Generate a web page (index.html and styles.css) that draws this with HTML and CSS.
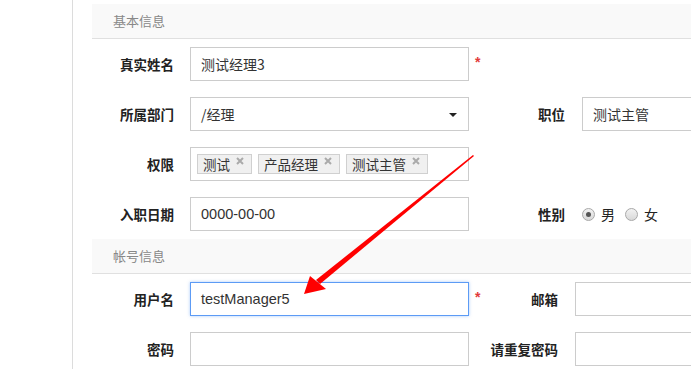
FILE: index.html
```html
<!DOCTYPE html>
<html>
<head>
<meta charset="utf-8">
<link rel="stylesheet" href="styles.css">
</head>
<body>
<div class="page">
  <div class="side"></div>
  <div class="main">
    <div class="sec-head">基本信息</div>
    <div class="row">
      <div class="lbl">真实姓名</div>
      <div class="field">测试经理3</div>
      <div class="mark">*</div>
    </div>
    <div class="row">
      <div class="lbl">所属部门</div>
      <div class="field select">/经理<span class="caret"></span></div>
      <div class="mark"></div>
      <div class="lbl2">职位</div>
      <div class="field">测试主管</div>
    </div>
    <div class="row">
      <div class="lbl">权限</div>
      <div class="field tags">
        <span class="tag">测试<svg class="x" viewBox="0 0 8 8"><path d="M1 1L7 7M7 1L1 7"/></svg></span>
        <span class="tag">产品经理<svg class="x" viewBox="0 0 8 8"><path d="M1 1L7 7M7 1L1 7"/></svg></span>
        <span class="tag">测试主管<svg class="x" viewBox="0 0 8 8"><path d="M1 1L7 7M7 1L1 7"/></svg></span>
      </div>
    </div>
    <div class="row">
      <div class="lbl">入职日期</div>
      <div class="field latin">0000-00-00</div>
      <div class="mark"></div>
      <div class="lbl2">性别</div>
      <div class="radios">
        <span class="radio on"></span><span class="rtxt">男</span>
        <span class="radio"></span><span class="rtxt">女</span>
      </div>
    </div>
    <div class="sec-head">帐号信息</div>
    <div class="row">
      <div class="lbl">用户名</div>
      <div class="field latin focus">testManager5</div>
      <div class="mark">*</div>
      <div class="lbl2 narrow">邮箱</div>
      <div class="field"></div>
    </div>
    <div class="row">
      <div class="lbl">密码</div>
      <div class="field"></div>
      <div class="mark"></div>
      <div class="lbl2 narrow">请重复密码</div>
      <div class="field"></div>
    </div>
  </div>
</div>
<svg class="arrow" viewBox="0 0 691 369" width="691" height="369">
  <polygon points="473,155 474,156 320,284 316,280" fill="#ff0000"/>
  <polygon points="304,294 310,276 326,289" fill="#ff0000"/>
</svg>
</body>
</html>
```

FILE: styles.css
```css
html, body {
  margin: 0;
  padding: 0;
  background: #fff;
  overflow: hidden;
}
body {
  width: 691px;
  height: 369px;
  position: relative;
  font-family: "Liberation Sans", "Noto Sans CJK SC", sans-serif;
  color: #333;
}
.page {
  display: flex;
  width: 691px;
  height: 369px;
  overflow: hidden;
}
.side {
  width: 72px;
  flex: none;
  border-right: 1px solid #dcdcdc;
}
.main {
  flex: 1;
  min-width: 0;
  overflow: hidden;
  padding-left: 19px;
  padding-top: 4px;
}
.sec-head {
  height: 34px;
  line-height: 34px;
  background: #f9f9f9;
  border-bottom: 1px solid #e0e0e0;
  padding-left: 21px;
  font-family: "Noto Sans CJK SC", sans-serif;
  font-size: 13px;
  color: #888;
}
.row {
  display: flex;
  align-items: center;
  padding: 8px 0;
}
.lbl, .lbl2 {
  flex: none;
  text-align: right;
  font-family: "Noto Sans CJK SC", sans-serif;
  font-weight: bold;
  font-size: 13.5px;
  color: #222;
  box-sizing: border-box;
}
.lbl {
  width: 98px;
  padding-right: 16px;
}
.lbl2 {
  width: 93px;
  padding-right: 17px;
}
.lbl2.narrow {
  width: 86px;
}
.field {
  flex: none;
  box-sizing: border-box;
  width: 279px;
  height: 34px;
  border: 1px solid #ccc;
  padding: 0 10px;
  line-height: 32px;
  font-family: "Noto Sans CJK SC", sans-serif;
  font-size: 14px;
  color: #333;
  position: relative;
}
.field.latin {
  font-family: "Liberation Sans", "Noto Sans CJK SC", sans-serif;
  font-size: 14.5px;
}
.field.focus {
  border-color: #5c9bf5;
  box-shadow: 0 0 3px rgba(92, 155, 245, 0.5);
}
.select .caret {
  position: absolute;
  right: 11px;
  top: 15px;
  width: 0;
  height: 0;
  border-left: 4px solid transparent;
  border-right: 4px solid transparent;
  border-top: 4px solid #222;
}
.tags {
  display: flex;
  align-items: center;
  gap: 6px;
  padding: 0 6px;
}
.tag {
  display: flex;
  align-items: center;
  height: 18px;
  line-height: 18px;
  padding: 0 7px 0 5px;
  background: #f0f0f0;
  border: 1px solid #d0d0d0;
  font-size: 13.5px;
  color: #333;
}
.x {
  width: 8px;
  height: 8px;
  margin-left: 6px;
  margin-top: -6px;
  stroke: #aaa;
  stroke-width: 2;
  fill: none;
}
.mark {
  flex: none;
  width: 20px;
  box-sizing: border-box;
  padding-left: 6px;
  color: #e23a3a;
  font-weight: bold;
  font-size: 14px;
  line-height: 14px;
  height: 14px;
  margin-top: -4px;
}
.radios {
  display: flex;
  align-items: center;
  font-family: "Noto Sans CJK SC", sans-serif;
  font-size: 14px;
  color: #222;
}
.radio {
  width: 11px;
  height: 11px;
  border-radius: 50%;
  border: 1px solid #a8a8a8;
  background: linear-gradient(#f2f2f2, #d8d8d8);
  position: relative;
}
.radio.on::after {
  content: "";
  position: absolute;
  left: 3px;
  top: 3px;
  width: 5px;
  height: 5px;
  border-radius: 50%;
  background: #555;
}
.rtxt {
  margin-left: 6px;
  margin-right: 10px;
}
.arrow {
  position: absolute;
  left: 0;
  top: 0;
  pointer-events: none;
}
```
